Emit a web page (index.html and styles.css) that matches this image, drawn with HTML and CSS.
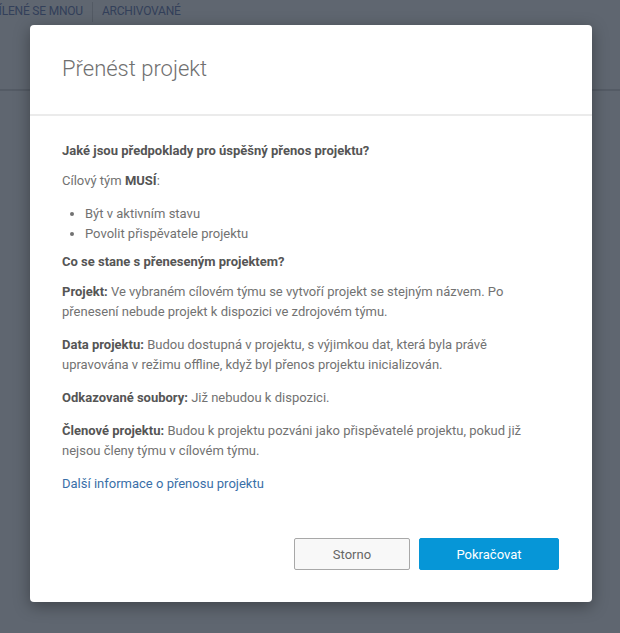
FILE: index.html
```html
<!DOCTYPE html>
<html lang="cs">
<head>
<meta charset="utf-8">
<title>Přenést projekt</title>
<link rel="stylesheet" href="styles.css">
</head>
<body>
<div class="page">
  <nav class="tabs">
    <span class="tab">SDÍLENÉ SE MNOU</span>
    <span class="tab-sep"></span>
    <span class="tab">ARCHIVOVANÉ</span>
  </nav>
  <div class="page-rule"></div>
</div>
<div class="overlay">
  <div class="modal">
    <header class="modal-header">
      <h1 class="modal-title">Přenést projekt</h1>
    </header>
    <div class="modal-body">
      <h2 class="q">Jaké jsou předpoklady pro úspěšný přenos projektu?</h2>
      <p class="p">Cílový tým <b>MUSÍ</b>:</p>
      <ul class="list">
        <li>Být v aktivním stavu</li>
        <li>Povolit přispěvatele projektu</li>
      </ul>
      <h2 class="q q2">Co se stane s přeneseným projektem?</h2>
      <p class="p"><b>Projekt:</b> Ve vybraném cílovém týmu se vytvoří projekt se stejným názvem. Po přenesení nebude projekt k dispozici ve zdrojovém týmu.</p>
      <p class="p"><b>Data projektu:</b> Budou dostupná v projektu, s výjimkou dat, která byla právě upravována v režimu offline, když byl přenos projektu inicializován.</p>
      <p class="p"><b>Odkazované soubory:</b> Již nebudou k dispozici.</p>
      <p class="p"><b>Členové projektu:</b> Budou k projektu pozváni jako přispěvatelé projektu, pokud již nejsou členy týmu v cílovém týmu.</p>
      <p class="p"><a class="link" href="#">Další informace o přenosu projektu</a></p>
    </div>
    <footer class="modal-footer">
      <button class="btn btn-secondary">Storno</button>
      <button class="btn btn-primary">Pokračovat</button>
    </footer>
  </div>
</div>
</body>
</html>
```

FILE: styles.css
```css
* { box-sizing: border-box; }
html, body {
  margin: 0;
  padding: 0;
  width: 620px;
  height: 633px;
  overflow: hidden;
  background: #5f6670;
  font-family: Roboto, "Noto Sans", sans-serif;
}
.page {
  height: 633px;
}
.tabs {
  display: flex;
  align-items: center;
  height: 23px;
  margin-left: -16px;
}
.tab {
  font-size: 12px;
  color: #33405a;
  line-height: 23px;
  letter-spacing: -0.2px;
}
.tab-sep {
  width: 1px;
  height: 20px;
  background: #535a64;
  margin: 0 9px 0 9px;
}
.page-rule {
  margin-top: 66px;
  height: 2px;
  background: #545b65;
}
.overlay {
  position: absolute;
  inset: 0;
  display: flex;
  justify-content: flex-start;
  padding: 25px 0 0 30px;
}
.modal {
  width: 562px;
  height: 577px;
  background: #fff;
  border-radius: 4px;
  box-shadow: 0 4px 16px rgba(0,0,0,0.35);
  display: flex;
  flex-direction: column;
}
.modal-header {
  height: 91px;
  border-bottom: 2px solid #ebebeb;
  padding: 30px 32px 0;
}
.modal-title {
  margin: 0;
  font-size: 22px;
  font-weight: 300;
  color: #707070;
  line-height: 28px;
}
.modal-body {
  padding: 25px 70px 0 32px;
  font-size: 13px;
  line-height: 20px;
  color: #727272;
}
.q {
  margin: 0;
  font-size: 13px;
  font-weight: 700;
  color: #555;
  line-height: 20px;
}
.q2 {
  margin-top: 8px;
}
.p {
  margin: 10px 0 0;
}
.p + .p {
  margin-top: 13px;
}
.p b {
  color: #555;
  font-weight: 700;
}
.list {
  margin: 13px 0 0;
  padding-left: 23px;
}
.link {
  color: #3a6fa8;
  text-decoration: none;
}
.modal-footer {
  margin-top: auto;
  display: flex;
  justify-content: flex-end;
  gap: 9px;
  padding: 0 33px 32px;
}
.btn {
  height: 32px;
  border-radius: 2px;
  font-family: inherit;
  font-size: 13px;
  cursor: pointer;
}
.btn-secondary {
  width: 116px;
  background: #f8f8f8;
  border: 1px solid #a8a8a8;
  color: #666;
}
.btn-primary {
  width: 140px;
  background: #0696d7;
  border: 1px solid #0696d7;
  color: #fff;
}
```
